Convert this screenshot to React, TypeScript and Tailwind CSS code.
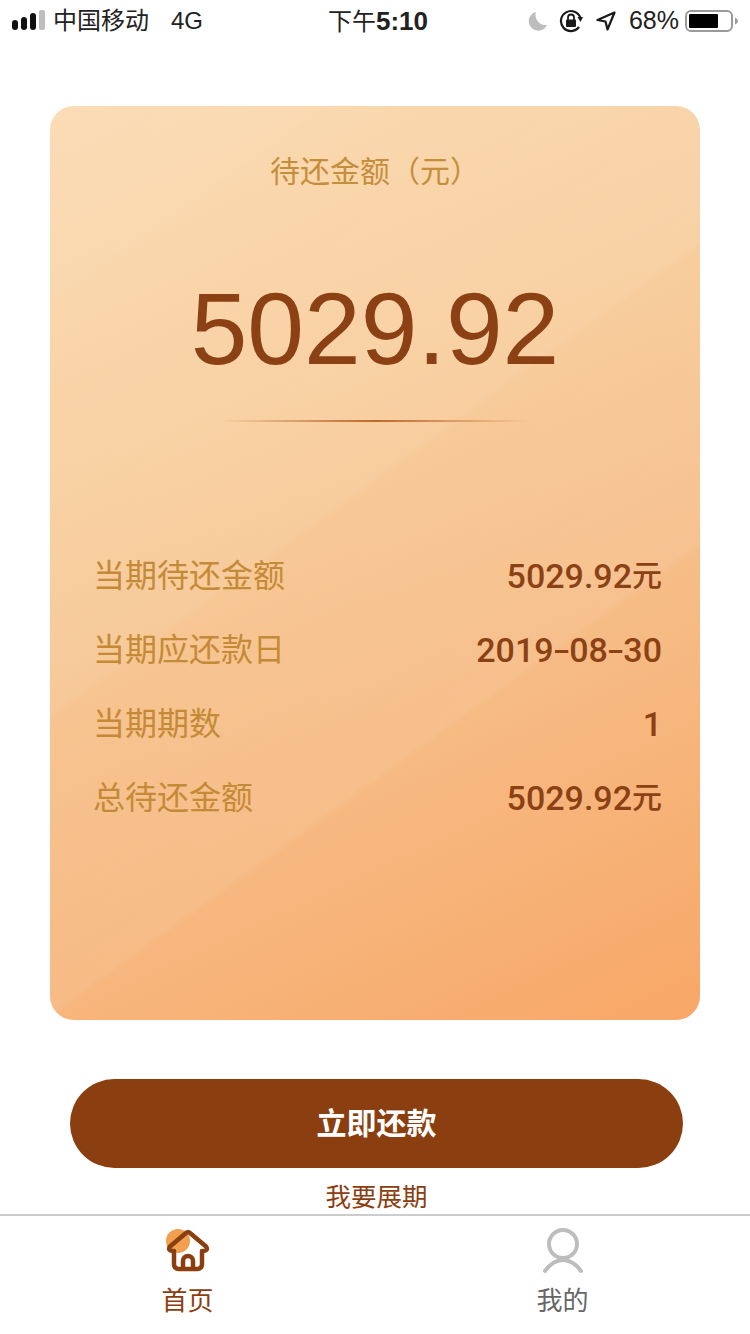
function Row({ label, children }: { label: string; children: React.ReactNode }) {
  return (
    <div className="flex h-[74px] items-center justify-between">
      <span className="text-[32px] leading-none text-[#c58a35]">{label}</span>
      <span className="flex items-center font-['Roboto','Noto_Sans_CJK_SC',sans-serif] text-[34px] leading-none font-medium text-[#8b4114]">{children}</span>
    </div>
  );
}

function Yuan() {
  return <span className="text-[30px] font-medium">元</span>;
}

function Dash() {
  return <span className="mx-[2px] inline-block scale-x-150">-</span>;
}

function Signal() {
  return (
    <svg width="34" height="22" viewBox="0 0 34 22" className="mr-[7px]">
      <rect x="0" y="10" width="6" height="10" rx="3" fill="#111" />
      <rect x="9" y="7" width="6" height="13" rx="3" fill="#111" />
      <rect x="18" y="3" width="6" height="17" rx="3" fill="#111" />
      <rect x="27" y="0" width="6" height="20" rx="2" fill="#bdbdbd" />
    </svg>
  );
}

function StatusIcons() {
  return (
    <>
      <svg width="20" height="20" viewBox="0 0 20 20" className="mr-[11px]">
        <path d="M8 1 A9.5 9.5 0 1 0 19 14 A10 10 0 0 1 8 1 Z" fill="#bdbdbd" />
      </svg>
      <svg width="24" height="24" viewBox="0 0 24 24" className="mr-[13px]" fill="none">
        <path d="M21.5 9 A10 10 0 1 0 20 18" stroke="#1a1a1a" strokeWidth="2.2" />
        <path d="M18.5 8 L24 8 L21.5 13 Z" fill="#1a1a1a" />
        <rect x="7" y="10.5" width="10" height="7.5" rx="1" fill="#1a1a1a" />
        <path d="M9 11 V8.5 a3 3 0 0 1 6 0 V11" stroke="#1a1a1a" strokeWidth="1.8" />
      </svg>
      <svg width="20" height="20" viewBox="0 0 20 20" className="mr-[13px]" fill="none">
        <path d="M18.5 1.5 L1.5 9 L9.5 10.5 L11.5 18.5 Z" stroke="#1a1a1a" strokeWidth="2.2" strokeLinejoin="round" />
      </svg>
    </>
  );
}

function Battery() {
  return (
    <svg width="54" height="22" viewBox="0 0 54 22" className="ml-[6px]">
      <rect x="1" y="1" width="46" height="20" rx="5" fill="#fff" stroke="#9a9a9a" strokeWidth="2" />
      <rect x="4" y="4" width="29" height="14" rx="1" fill="#000" />
      <path d="M50 7.5 Q53 9 53 11 Q53 13 50 14.5 Z" fill="#9a9a9a" />
    </svg>
  );
}

function HomeIcon() {
  return (
    <svg width="56" height="50" viewBox="0 0 56 50" fill="none">
      <circle cx="18" cy="15" r="12" fill="#f2a050" />
      <path
        d="M14 25 Q7 25 10 20.5 L26 7 Q28 5 30 7 L46 20.5 Q49 25 42 25 L42 38 Q42 43 37 43 L19 43 Q14 43 14 38 Z"
        stroke="#8b3e10"
        strokeWidth="4.5"
        strokeLinejoin="round"
      />
      <path d="M23 43 V35 a5 5 0 0 1 10 0 V43" stroke="#8b3e10" strokeWidth="4.5" />
    </svg>
  );
}

function UserIcon() {
  return (
    <svg width="50" height="50" viewBox="0 0 50 50" fill="none">
      <circle cx="25" cy="18" r="14" stroke="#bdbdbd" strokeWidth="4" />
      <path d="M7 45 Q15 34 25 34 Q35 34 43 45" stroke="#bdbdbd" strokeWidth="4" strokeLinecap="round" />
    </svg>
  );
}

export default function App() {
  return (
    <div className="flex h-[1334px] w-[750px] flex-col overflow-hidden bg-white font-['Liberation_Sans','Noto_Sans_CJK_SC',sans-serif]">
      <div className="flex h-[42px] items-center justify-between pl-3 pr-[11px] text-[#222]">
        <div className="flex w-[300px] items-center">
          <Signal />
          <span className="text-[24px]">中国移动</span>
          <span className="ml-[22px] text-[24px]">4G</span>
        </div>
        <div className="pl-[5px] text-[24px]">
          下午<span className="text-[26px] font-bold">5:10</span>
        </div>
        <div className="flex w-[300px] items-center justify-end">
          <StatusIcons />
          <span className="text-[25px]">68%</span>
          <Battery />
        </div>
      </div>
      <div className="mx-[50px] mt-[64px] h-[914px] rounded-[24px] bg-[linear-gradient(144deg,rgba(255,255,255,0)_0%,rgba(255,255,255,0.03)_14%,rgba(255,255,255,0)_14.6%),linear-gradient(144deg,rgba(255,255,255,0)_20%,rgba(255,255,255,0.06)_43.7%,rgba(255,255,255,0)_44.3%),linear-gradient(144deg,rgba(255,255,255,0)_46%,rgba(255,255,255,0.07)_65.4%,rgba(255,255,255,0)_66%),linear-gradient(155deg,#fbdcb6_0%,#f8d0a1_33%,#f6bd87_62%,#f8a767_100%)]">
        <div className="pt-[51px] text-center text-[30px] leading-none text-[#c58e3b]">待还金额（元）</div>
        <div className="mt-[91px] text-center text-[102px] leading-none text-[#8b4114]">5029.92</div>
        <div className="mx-auto mt-[40px] h-[2px] w-[310px] bg-[linear-gradient(90deg,transparent,#c0682c,transparent)]" />
        <div className="mt-[117px] mr-[38px] ml-[43px]">
          <Row label="当期待还金额">5029.92<Yuan /></Row>
          <Row label="当期应还款日">2019<Dash />08<Dash />30</Row>
          <Row label="当期期数">1</Row>
          <Row label="总待还金额">5029.92<Yuan /></Row>
        </div>
      </div>
      <button className="mx-[70px] mt-[59px] h-[89px] w-[613px] rounded-full bg-[#8b3e10] text-[30px] font-bold text-white">立即还款</button>
      <div className="mt-[17px] pl-[3px] text-center text-[25.5px] leading-none text-[#8b3e10]">我要展期</div>
      <div className="mt-[3px] flex flex-1 border-t-2 border-[#ccc]">
        <div className="flex w-1/2 flex-col items-center pt-[10px]">
          <HomeIcon />
          <span className="mt-[12px] text-[26px] leading-none text-[#8b3e10]">首页</span>
        </div>
        <div className="flex w-1/2 flex-col items-center pt-[10px]">
          <UserIcon />
          <span className="mt-[12px] text-[26px] leading-none text-[#666]">我的</span>
        </div>
      </div>
    </div>
  );
}
